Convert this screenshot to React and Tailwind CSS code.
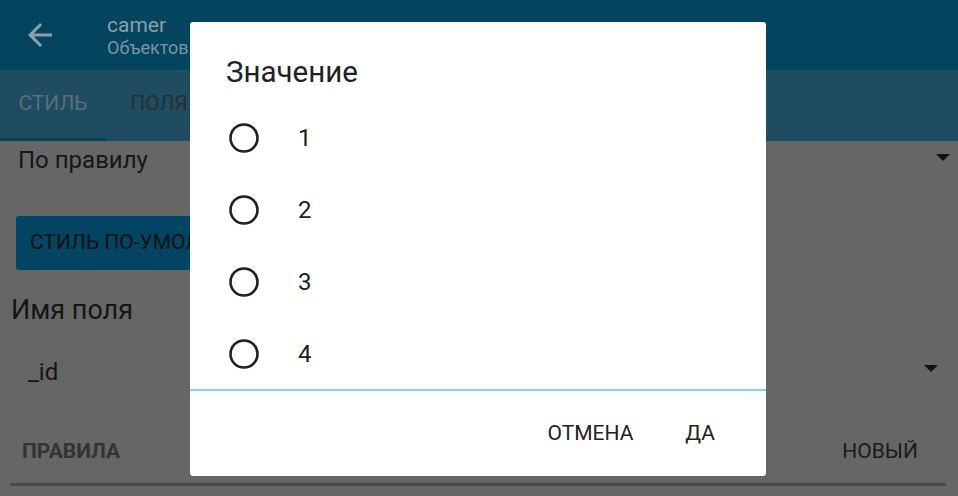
export default function App() {
  const values = ["1", "2", "3", "4"];
  return (
    <div
      className="relative h-[496px] w-[958px] overflow-hidden bg-[#666666]"
      style={{ fontFamily: "Roboto, 'Noto Sans', sans-serif" }}
    >
      {/* header */}
      <div className="flex h-[70px] items-center bg-[#03445f]">
        <div className="ml-[22px] flex h-[36px] w-[36px] items-center justify-center">
          <svg width="36" height="36" viewBox="0 0 24 24" fill="#8aa0ab">
            <path d="M20 11H7.83l5.59-5.59L12 4l-8 8 8 8 1.41-1.41L7.83 13H20v-2z" />
          </svg>
        </div>
        <div className="ml-[49px] flex flex-col">
          <span className="text-[21px] leading-[26px] text-[#8aa0ab]">camer</span>
          <span className="text-[18px] leading-[20px] text-[#7c94a0]">Объектов: 12</span>
        </div>
      </div>

      {/* tabs */}
      <div className="flex h-[71px] bg-[#1e4c60]">
        <div className="flex w-[106px] flex-col">
          <div className="flex flex-1 items-center justify-center text-[21px] text-[#5e6e75]">
            СТИЛЬ
          </div>
          <div className="h-[3px] bg-[#03445f]" />
        </div>
        <div className="flex w-[106px] items-center justify-center pb-[3px] text-[21px] text-[#2a2d2f]">
          ПОЛЯ
        </div>
      </div>

      {/* content */}
      <div className="flex flex-col">
        <div className="flex h-[38px] items-center justify-between pl-[18px] pr-[8px]">
          <span className="text-[24px] text-[#161616]">По правилу</span>
          <svg width="14" height="8" viewBox="0 0 14 8" className="mt-[-4px]">
            <path d="M0 0h14L7 7z" fill="#111" />
          </svg>
        </div>
        <div className="mt-[37px] pl-[16px]">
          <div className="flex h-[54px] w-[300px] items-center rounded-[3px] bg-[#024461] pl-[14px] text-[21px] text-[#121212]">
            СТИЛЬ ПО-УМОЛЧАНИЮ
          </div>
        </div>
        <div className="mt-[24px] pl-[11px] text-[27px] leading-[32px] text-[#151515]">
          Имя поля
        </div>
        <div className="mt-[28px] flex h-[36px] items-center justify-between pl-[28px] pr-[20px]">
          <span className="text-[24px] text-[#151515]">_id</span>
          <svg width="14" height="8" viewBox="0 0 14 8" className="mt-[-6px]">
            <path d="M0 0h14L7 7z" fill="#111" />
          </svg>
        </div>
        <div className="mt-[46px] flex items-center justify-between pl-[22px] pr-[40px]">
          <span className="text-[21px] font-bold text-[#333333]">ПРАВИЛА</span>
          <span className="text-[21px] text-[#1a1a1a]">НОВЫЙ</span>
        </div>
        <div className="ml-[10px] mt-[15px] h-[3px] w-[936px] bg-[#4a4a4a]" />
      </div>

      {/* dialog */}
      <div className="absolute left-[190px] top-[22px] flex h-[454px] w-[576px] flex-col rounded-[3px] bg-white">
        <div className="pl-[36px] pt-[34px] pb-[14px] text-[29.5px] leading-[32px] text-[#212121]">
          Значение
        </div>
        <div className="flex h-[287px] flex-col overflow-hidden">
          {values.map((v) => (
            <div key={v} className="flex h-[72px] shrink-0 items-center pl-[39px]">
              <svg width="30" height="30" viewBox="0 0 30 30">
                <circle cx="15" cy="15" r="13.5" fill="none" stroke="#212121" strokeWidth="2.6" />
              </svg>
              <span className="ml-[39px] text-[24px] text-[#212121]">{v}</span>
            </div>
          ))}
        </div>
        <div className="h-[2px] bg-[#81d4fa]" />
        <div className="flex flex-1 items-center justify-end gap-[52px] pr-[51px] text-[21px] text-[#212121]">
          <span>ОТМЕНА</span>
          <span>ДА</span>
        </div>
      </div>
    </div>
  );
}
